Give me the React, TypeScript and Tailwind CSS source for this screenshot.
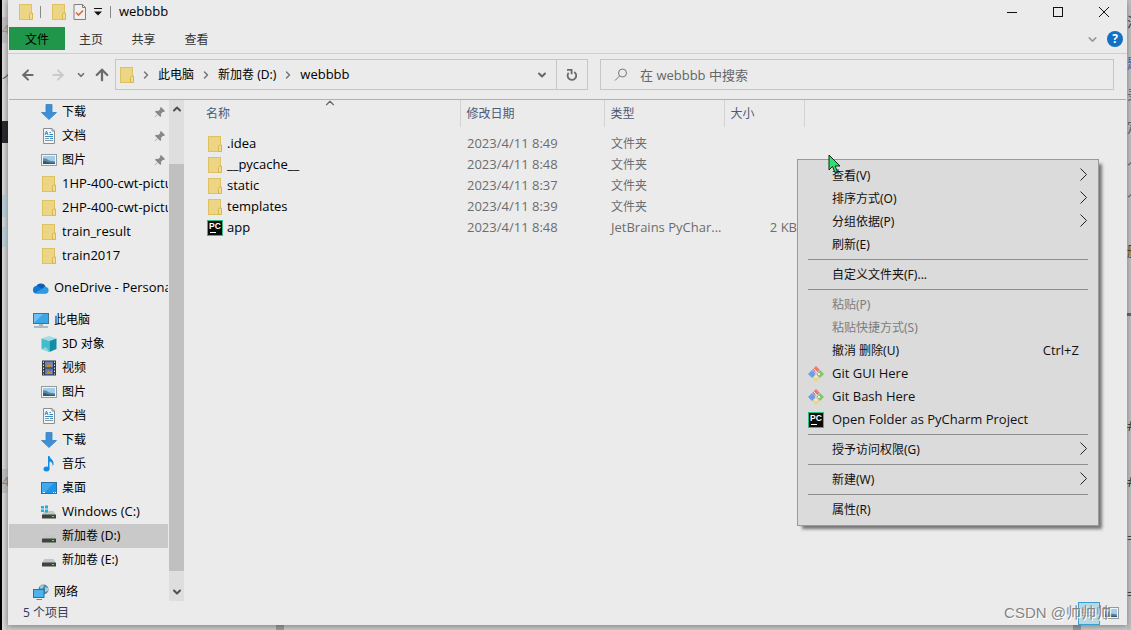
import { ReactNode } from 'react'
import { ArrowLeft, ArrowRight, ArrowUp, ChevronDown, ChevronRight, ChevronUp } from 'lucide-react'

type TreeItem = { label: string; icon: ReactNode; pinned?: boolean; selected?: boolean }

type MenuEntry = { label: string; icon?: ReactNode; shortcut?: string; arrow?: boolean; disabled?: boolean }

function FolderIcon() {
  return (
    <svg width="14" height="16" viewBox="0 0 14 16" className="shrink-0">
      <rect x="0.5" y="0.5" width="12" height="15" fill="#ecd584" stroke="#e0c160" />
      <path d="M10.5 15.5v-5l1-1.5h2v6.5z" fill="#f0dc94" stroke="#d9b646" />
    </svg>
  )
}

function PropertiesIcon() {
  return (
    <svg width="14" height="16" viewBox="0 0 14 16" className="shrink-0">
      <path d="M1 .5h8.500l3 3v12H1z" fill="#f0f0f0" stroke="#808080" />
      <path d="M9.500 .5v3h3" fill="none" stroke="#808080" />
      <path d="M3 8.500l2.500 2.500L10 6.500" fill="none" stroke="#dd6a40" strokeWidth="1.600" />
    </svg>
  )
}

function DownloadIcon() {
  return (
    <svg width="16" height="16" viewBox="0 0 16 16" className="shrink-0">
      <path d="M5 .5h6v8h4.500L8 15.500.5 8.500H5z" fill="#3f8fd6" stroke="#3480c4" strokeWidth="0.8" />
    </svg>
  )
}

function DocIcon() {
  return (
    <svg width="16" height="16" viewBox="0 0 16 16" className="shrink-0">
      <path d="M2.500.5H11l2.500 2.500v12.500h-11z" fill="#f2f4f5" stroke="#8a8f92" />
      <path d="M11 .5V3h2.500" fill="none" stroke="#8a8f92" />
      <path d="M4 7l1.500-4L7 7M4.500 5.500h2M8.500 4.500H10M8.500 6.500H12M4 8.500h8M9 10.500h3" fill="none" stroke="#3a8fc9" />
      <path d="M4 10.500h4M4 12.500h8" stroke="#8a9aa5" />
    </svg>
  )
}

function PictureIcon() {
  return (
    <svg width="16" height="16" viewBox="0 0 16 16" className="shrink-0">
      <rect x="0.500" y="2.500" width="15" height="11" fill="#f4f4f4" stroke="#949a9e" />
      <rect x="2" y="4" width="12" height="8" fill="#9fcdec" />
      <path d="M2 6.500h3l3 2 6 1v2.500H2z" fill="#5d86a0" />
      <path d="M2 9l3 .5 3 1 6 .5V12H2z" fill="#33586b" />
    </svg>
  )
}

function CloudIcon() {
  return (
    <svg width="16" height="16" viewBox="0 0 16 16" className="shrink-0">
      <path d="M3 6.500a5.300 5.300 0 0 1 9.600.3L8 11H3z" fill="#0f5fb0" />
      <path d="M0 9.800A3.600 3.600 0 0 1 5.800 6.700L14 12.500l-1 1H3.500A3.600 3.600 0 0 1 0 9.800z" fill="#1478cf" />
      <path d="M2.200 13.200L10 8a3.800 3.800 0 0 1 3-.9 3.250 3.250 0 0 1-.2 6.400H3.500z" fill="#2b9be8" />
    </svg>
  )
}

function ComputerIcon() {
  return (
    <svg width="16" height="16" viewBox="0 0 16 16" className="shrink-0">
      <rect x="0.500" y="1.500" width="15" height="10" fill="#3ba6e8" stroke="#47718d" />
      <path d="M1 11V2h9z" fill="#6cc0f2" />
      <path d="M6 13h4M1 15h14" stroke="#6b8797" />
    </svg>
  )
}

function CubeIcon() {
  return (
    <svg width="16" height="16" viewBox="0 0 16 16" className="shrink-0">
      <path d="M8 0l7.500 2.500L9 5 .5 2.500z" fill="#9fdde4" />
      <path d="M.5 2.500L8.500 5v11L.5 13z" fill="#43bccb" />
      <path d="M8.500 5l7-2.500V13l-7 3z" fill="#158ca5" />
      <path d="M1 13l4-2 3.500 5z" fill="#8ad9df" />
    </svg>
  )
}

function VideoIcon() {
  return (
    <svg width="16" height="16" viewBox="0 0 16 16" className="shrink-0">
      <rect x="1" y="0.500" width="14" height="15" fill="#33363b" />
      <path d="M2.500 1.500v13M13.500 1.500v13" stroke="#e3e3e3" strokeDasharray="1.500 1.500" />
      <rect x="4" y="1.500" width="8" height="6" fill="#5d85c8" />
      <rect x="4" y="8.500" width="8" height="6" fill="#5179be" />
      <path d="M5 7l2-4 2 2 2-2v4zM5 14l2-4 2 2 2-2v4z" fill="#c98536" />
    </svg>
  )
}

function MusicIcon() {
  return (
    <svg width="16" height="16" viewBox="0 0 16 16" className="shrink-0">
      <ellipse cx="5.500" cy="13" rx="3" ry="2.500" fill="#128ce0" />
      <path d="M7 0h1.500c.5 3 4.500 3.500 4 8.500l-1 1.500c.3-3-1-4-3-4.500V13H7z" fill="#128ce0" />
    </svg>
  )
}

function DesktopIcon() {
  return (
    <svg width="16" height="16" viewBox="0 0 16 16" className="shrink-0">
      <rect x="0.500" y="2.500" width="15" height="11" fill="#1e94e6" stroke="#2d6f9e" />
      <path d="M1 3h12L3 13H1z" fill="#41a9ef" />
      <path d="M2 12.500h2M12 12.500h1M14 12.500h1" stroke="#fff" />
    </svg>
  )
}

function DriveIcon({ windows = false }: { windows?: boolean }) {
  return (
    <svg width="16" height="16" viewBox="0 0 16 16" className="shrink-0">
      <path d="M3.500 7h9L15 11H1z" fill="#c4c6c6" />
      <rect x="1" y="10.500" width="14" height="4" rx="0.500" fill="#3f4441" />
      <rect x="11" y="12" width="2" height="1" fill="#6ee06b" />
      {windows && <path d="M0 2h3v2.500H0zM4 1.500h3v3H4zM0 5.500h3V8H0zM4 5.500h3v3H4z" fill="#1fb0dd" />}
    </svg>
  )
}

function NetworkIcon() {
  return (
    <svg width="16" height="16" viewBox="0 0 16 16" className="shrink-0">
      <circle cx="10.500" cy="5.500" r="5" fill="#4f87a3" />
      <path d="M7 2l4-1.500L10 4 7.500 5zM12 3l3 1v3l-3 1z" fill="#9fcfe0" />
      <rect x="0.500" y="5.500" width="10.500" height="8" fill="#4bb3ee" stroke="#36708f" />
      <path d="M3.500 15.500H9" stroke="#6b8797" />
    </svg>
  )
}

function PyCharmIcon() {
  return (
    <svg width="16" height="16" viewBox="0 0 16 16" className="shrink-0">
      <rect x="0.500" y="0.500" width="15" height="15" fill="#0c0c0c" stroke="#2dbe85" />
      <text x="2" y="9" fill="#fff" fontSize="8.500" fontWeight="700" fontFamily="Liberation Sans, sans-serif">PC</text>
      <path d="M3 12.500h6" stroke="#fff" />
    </svg>
  )
}

function GitIcon() {
  return (
    <svg width="16" height="16" viewBox="0 0 16 16" className="shrink-0">
      <path d="M8 0l3.700 3.700L8 7.400 4.300 3.700z" fill="#e87b78" />
      <path d="M4 4l4 4-4 4-4-4z" fill="#6c9ee8" />
      <path d="M12 4l4 4-4 4-4-4z" fill="#83c46d" />
      <path d="M8 8.600l3.700 3.700L8 16l-3.700-3.700z" fill="#ead58a" />
      <path d="M5.500 2.500L8 5l2.500 2.500M8 5v6" stroke="#e3e3e3" fill="none" />
      <circle cx="11" cy="8" r="1.200" fill="#eee" />
      <circle cx="8" cy="11" r="1" fill="#eee" />
    </svg>
  )
}

function PinIcon() {
  return (
    <svg width="12" height="12" viewBox="0 0 12 12" className="shrink-0">
      <path d="M7 1l4 4-1 1-1-.3-2 2 .2 2.300-1 1L3.800 8.500 1 11.300.7 11l2.800-2.800L1 5.800l1-1 2.300.2 2-2L6 2z" fill="#85898d" />
    </svg>
  )
}

function RefreshIcon() {
  return (
    <svg width="12" height="14" viewBox="0 0 12 14" fill="none" stroke="#6b6b6b" strokeWidth="1.800">
      <path d="M8.200 3.900A4.300 4.300 0 1 1 2.600 4.800" />
      <path d="M1 1.900h4.600v4.300" />
    </svg>
  )
}

function SearchIcon() {
  return (
    <svg width="14" height="14" viewBox="0 0 14 14" fill="none" stroke="#777" className="shrink-0">
      <circle cx="8.500" cy="5" r="4" />
      <path d="M5.500 8L1 12.500" />
    </svg>
  )
}

const quickAccess: TreeItem[] = [
  { label: '下载', icon: <DownloadIcon />, pinned: true },
  { label: '文档', icon: <DocIcon />, pinned: true },
  { label: '图片', icon: <PictureIcon />, pinned: true },
  { label: '1HP-400-cwt-pictu', icon: <FolderIcon /> },
  { label: '2HP-400-cwt-pictu', icon: <FolderIcon /> },
  { label: 'train_result', icon: <FolderIcon /> },
  { label: 'train2017', icon: <FolderIcon /> },
]

const computer: TreeItem[] = [
  { label: '3D 对象', icon: <CubeIcon /> },
  { label: '视频', icon: <VideoIcon /> },
  { label: '图片', icon: <PictureIcon /> },
  { label: '文档', icon: <DocIcon /> },
  { label: '下载', icon: <DownloadIcon /> },
  { label: '音乐', icon: <MusicIcon /> },
  { label: '桌面', icon: <DesktopIcon /> },
  { label: 'Windows (C:)', icon: <DriveIcon windows /> },
  { label: '新加卷 (D:)', icon: <DriveIcon />, selected: true },
  { label: '新加卷 (E:)', icon: <DriveIcon /> },
]

const files = [
  { name: '.idea', date: '2023/4/11 8:49', type: '文件夹', size: '' },
  { name: '__pycache__', date: '2023/4/11 8:48', type: '文件夹', size: '' },
  { name: 'static', date: '2023/4/11 8:37', type: '文件夹', size: '' },
  { name: 'templates', date: '2023/4/11 8:39', type: '文件夹', size: '' },
  { name: 'app', date: '2023/4/11 8:48', type: 'JetBrains PyChar...', size: '2 KB' },
]

const menuGroups: MenuEntry[][] = [
  [
    { label: '查看(V)', arrow: true },
    { label: '排序方式(O)', arrow: true },
    { label: '分组依据(P)', arrow: true },
    { label: '刷新(E)' },
  ],
  [{ label: '自定义文件夹(F)...' }],
  [
    { label: '粘贴(P)', disabled: true },
    { label: '粘贴快捷方式(S)', disabled: true },
    { label: '撤消 删除(U)', shortcut: 'Ctrl+Z' },
    { label: 'Git GUI Here', icon: <GitIcon /> },
    { label: 'Git Bash Here', icon: <GitIcon /> },
    { label: 'Open Folder as PyCharm Project', icon: <PyCharmIcon /> },
  ],
  [{ label: '授予访问权限(G)', arrow: true }],
  [{ label: '新建(W)', arrow: true }],
  [{ label: '属性(R)' }],
]

// latin-only labels run one size larger than the chinese ones
const latin = "text-[13px] pb-0.5 font-['Open_Sans','Noto_Sans_CJK_SC',sans-serif]"
const textSize = (label: string) => (/[\u4e00-\u9fff]/.test(label) ? 'text-[12px]' : latin)

function TreeRow({ item, root = false }: { item: TreeItem; root?: boolean }) {
  return (
    <button
      className={`flex h-6 w-full shrink-0 items-center gap-[5px] overflow-hidden whitespace-nowrap text-left ${root ? 'pl-6' : 'pl-8'} ${item.selected ? 'bg-[#c9c9c9]' : ''}`}
    >
      <span className="flex w-4 shrink-0 justify-center">{item.icon}</span>
      <span className={`flex-1 ${textSize(item.label)}`}>{item.label}</span>
      {item.pinned && (
        <span className="pr-[2px]">
          <PinIcon />
        </span>
      )}
    </button>
  )
}

function Sidebar() {
  return (
    <div className="flex w-[176px] shrink-0">
      <nav className="flex min-h-0 w-[159px] flex-col gap-2 overflow-hidden">
        <div className="shrink-0">
          {quickAccess.map((item) => (
            <TreeRow key={item.label} item={item} />
          ))}
        </div>
        <TreeRow root item={{ label: 'OneDrive - Persona', icon: <CloudIcon /> }} />
        <div className="shrink-0">
          <TreeRow root item={{ label: '此电脑', icon: <ComputerIcon /> }} />
          {computer.map((item) => (
            <TreeRow key={item.label} item={item} />
          ))}
        </div>
        <TreeRow root item={{ label: '网络', icon: <NetworkIcon /> }} />
      </nav>
      <div className="ml-px flex w-[15px] flex-col bg-[#dedede] text-[#505050]">
        <button aria-label="向上滚动" className="flex h-[18px] items-center justify-center">
          <ChevronUp size={12} strokeWidth={4} />
        </button>
        <div className="h-[46px]" />
        <div className="flex-1 bg-[#c0c0c0]" />
        <div className="h-3" />
        <button aria-label="向下滚动" className="flex h-[18px] items-center justify-center">
          <ChevronDown size={12} strokeWidth={4} />
        </button>
      </div>
    </div>
  )
}

function FileTable() {
  return (
    <div className="min-w-0 flex-1 pl-[13px]">
      <table className="w-full table-fixed border-collapse">
        <thead>
          <tr className="h-[27px] text-left text-[12px] text-[#4c5a78]">
            <th className="relative w-[262px] border-r border-[#d3d3d3] pl-2 font-normal">
              名称
              <ChevronUp size={14} strokeWidth={2} className="absolute -top-1 left-[125px] text-[#666]" />
            </th>
            <th className="w-[144px] border-r border-[#d3d3d3] pl-[6px] font-normal">修改日期</th>
            <th className="w-[120px] border-r border-[#d3d3d3] pl-[6px] font-normal">类型</th>
            <th className="w-[80px] border-r border-[#d3d3d3] pl-[6px] font-normal">大小</th>
            <th />
          </tr>
          <tr className="h-[6px]" />
        </thead>
        <tbody className="text-[#6d6d6d]">
          {files.map((file) => (
            <tr key={file.name} className="h-[21px] whitespace-nowrap">
              <td className="pl-[9px] text-black">
                <div className="flex items-center gap-1">
                  <span className="flex w-4 justify-center">{file.size ? <PyCharmIcon /> : <FolderIcon />}</span>
                  <span className={textSize(file.name)}>{file.name}</span>
                </div>
              </td>
              <td className={`pl-[7px] ${latin}`}>{file.date}</td>
              <td className={`pl-[7px] ${textSize(file.type)}`}>{file.type}</td>
              <td className={`pr-[7px] text-right ${latin}`}>{file.size}</td>
              <td />
            </tr>
          ))}
        </tbody>
      </table>
    </div>
  )
}

function ContextMenu() {
  return (
    <div
      role="menu"
      className="absolute top-[159px] left-[789px] w-[302px] border border-[#999] bg-[#dbdbdb] py-1 shadow-[4px_4px_3px_-1px_rgba(0,0,0,0.5)]"
    >
      {menuGroups.map((group, i) => (
        <div key={i}>
          {i > 0 && <div className="mx-[10px] my-[3px] h-px bg-[#8f8f8f]" />}
          {group.map((entry) => (
            <button
              key={entry.label}
              role="menuitem"
              disabled={entry.disabled}
              className={`flex h-[23px] w-full items-center whitespace-nowrap pr-[9px] pl-[10px] text-left ${entry.disabled ? 'text-[#7d7d7d]' : 'text-[#111]'}`}
            >
              <span className="w-6 shrink-0">{entry.icon}</span>
              <span className={`flex-1 ${textSize(entry.label)}`}>{entry.label}</span>
              {entry.shortcut && <span className={`pr-[10px] ${latin}`}>{entry.shortcut}</span>}
              {entry.arrow && (
                <svg width="10" height="15" viewBox="0 0 10 15" fill="none" stroke="#222">
                  <path d="M1.500 .5l6 6-6 6" />
                </svg>
              )}
            </button>
          ))}
        </div>
      ))}
    </div>
  )
}

function Cursor() {
  return (
    <svg width="13" height="20" viewBox="0 0 13 20" className="absolute top-[154px] left-[820px]">
      <path d="M1 1v15l3.500-3.500L7 18.500l2.500-1L7 12h5z" fill="#2fe070" stroke="#0b2a14" />
    </svg>
  )
}

function Crumb({ children }: { children: string }) {
  return (
    <>
      <ChevronRight size={12} strokeWidth={3} className="mx-[6px] text-[#777]" />
      <button className={textSize(children)}>{children}</button>
    </>
  )
}

export default function App() {
  return (
    <div className="flex h-screen min-h-[630px] overflow-hidden bg-[#cfcfcf] font-['Noto_Sans','Noto_Sans_CJK_SC',sans-serif] leading-4 text-black">
      {/* page behind the window, left edge */}
      <div className="flex w-2 shrink-0 flex-col overflow-hidden border-l-2 border-black bg-gradient-to-r from-[#dadada] to-[#c4c4c4] text-[13px]">
        <div className="mt-[17px] h-[26px] bg-[#bfbfbf] pt-1 text-[#999]">4</div>
        <div className="mt-7 h-5 text-[#555]">个</div>
        <div className="mt-[30px] h-[22px] bg-[#2a2a2e]" />
        <div className="mt-[52px] h-[22px] bg-[#b9cdd6]" />
        <div className="mt-[10px] h-5 bg-[#b9cdd6]" />
        <div className="mt-[222px] h-6 bg-[#bdbdbd] pt-1 text-[#888]">4</div>
      </div>

      <div className="flex min-w-0 flex-1 flex-col">
        <div className="relative flex min-h-0 flex-1 flex-col bg-[#ebebeb] shadow-[0_2px_6px_rgba(0,0,0,0.35)]">
          <header className="flex h-6 shrink-0 items-center pl-[11px]">
            <FolderIcon />
            <div className="mx-[7px] h-3 w-px bg-[#888]" />
            <div className="ml-[4px] flex items-center gap-[7px]">
              <FolderIcon />
              <PropertiesIcon />
              <svg width="8" height="8" viewBox="0 0 8 8" aria-hidden="true">
                <path d="M0 .5h8" stroke="#111" />
                <path d="M0 3.500h8L4 7.500z" fill="#111" />
              </svg>
            </div>
            <div className="mx-2 h-3 w-px bg-[#888]" />
            <h1 className={`flex-1 ${latin}`}>webbbb</h1>
            <div className="flex">
              <button aria-label="最小化" className="flex w-[46px] justify-center">
                <svg width="12" height="12" viewBox="0 0 12 12" stroke="#111">
                  <path d="M1 6.500h10" />
                </svg>
              </button>
              <button aria-label="最大化" className="flex w-[46px] justify-center">
                <svg width="12" height="12" viewBox="0 0 12 12" stroke="#111" fill="none">
                  <rect x="1.500" y="1.500" width="9" height="9" />
                </svg>
              </button>
              <button aria-label="关闭" className="flex w-[46px] justify-center">
                <svg width="12" height="12" viewBox="0 0 12 12" stroke="#111">
                  <path d="M1 1l10 10M11 1L1 11" />
                </svg>
              </button>
            </div>
          </header>

          <div className="flex h-[30px] shrink-0 items-center border-b border-[#cfcfcf] pl-px text-[12px] text-[#333]">
            <button className="h-[23px] w-14 bg-[#1f9649] pt-0.5 text-black">文件</button>
            <button className="w-[52px] pt-0.5">主页</button>
            <button className="w-[53px] pt-0.5">共享</button>
            <button className="w-[53px] pt-0.5">查看</button>
            <button aria-label="展开功能区" className="mr-[8px] ml-auto pt-0.5 text-[#999]">
              <ChevronDown size={13} strokeWidth={3} />
            </button>
            <button
              aria-label="帮助"
              className="mr-1 h-4 w-4 rounded-full bg-[#1470c4] text-[12px] leading-4 font-bold text-white"
            >
              ?
            </button>
          </div>

          <div className="mx-px flex h-[46px] shrink-0 items-center border-b border-[#b0b0b0] pt-[5px] pb-[9px]">
            <div className="flex w-[106px] items-center pl-[11px] text-[#6b6b6b]">
              <button aria-label="后退"><ArrowLeft size={16} strokeWidth={3} /></button>
              <button aria-label="前进" className="ml-[14px] text-[#cacaca]"><ArrowRight size={16} strokeWidth={3} /></button>
              <button aria-label="最近" className="ml-[10px]"><ChevronDown size={10} strokeWidth={4} /></button>
              <button aria-label="上移" className="ml-[7px]"><ArrowUp size={18} strokeWidth={3} /></button>
            </div>
            <div className="flex h-[31px] flex-1 items-center border border-[#c6c6c6] pl-1">
              <FolderIcon />
              <Crumb>此电脑</Crumb>
              <Crumb>新加卷 (D:)</Crumb>
              <Crumb>webbbb</Crumb>
              <button aria-label="历史记录" className="ml-auto pr-2 text-[#666]">
                <ChevronDown size={12} strokeWidth={4} />
              </button>
            </div>
            <button
              aria-label="刷新"
              className="flex h-[31px] w-[31px] items-center justify-center border border-l-0 border-[#c6c6c6]"
            >
              <RefreshIcon />
            </button>
            <label className="mr-3 ml-3 flex h-[31px] w-[514px] items-center border border-[#c6c6c6] pl-[13px]">
              <SearchIcon />
              <input
                type="search"
                aria-label="搜索"
                placeholder="在 webbbb 中搜索"
                className="ml-3 min-w-0 flex-1 bg-transparent font-['Open_Sans','Noto_Sans_CJK_SC',sans-serif] text-[13px] outline-none placeholder:text-[#666]"
              />
            </label>
          </div>

          <main className="flex min-h-0 flex-1 pl-px">
            <Sidebar />
            <FileTable />
          </main>

          <footer className="flex h-6 shrink-0 items-center pr-2 pl-[15px] text-[12px] text-[#33405e]">
            <span className="flex-1">5 个项目</span>
            <div className="flex items-center">
              <button
                aria-label="详细信息"
                className="flex h-[23px] w-[22px] items-center justify-center border border-[#3aa0cf] bg-[#b9d8e6]"
              >
                <svg width="14" height="10" viewBox="0 0 14 10" stroke="#7d98a5">
                  <path d="M0 1.500h3M5 1.500h9M0 4.500h3M5 4.500h9M0 7.500h3M5 7.500h9" />
                </svg>
              </button>
              <button aria-label="大图标" className="ml-[3px]"><PictureIcon /></button>
            </div>
          </footer>

          <ContextMenu />
          <Cursor />
          <div className="absolute right-4 bottom-0.5 text-[15px] leading-5 text-[#858585] [font-family:'Liberation_Sans','Noto_Sans_CJK_SC',sans-serif] text-shadow-[1px_1px_0_#fff]">
            CSDN @帅帅帅
          </div>
        </div>
        <div className="flex h-[5px] shrink-0 pl-[268px]">
          <div className="w-2 bg-[#a0a0a0]" />
          <div className="ml-auto mr-[46px] w-2 bg-[#a0a0a0]" />
        </div>
      </div>

      {/* right edge */}
      <div className="flex w-1 shrink-0 flex-col overflow-hidden bg-[#bfc1c3] text-[14px] text-[#444]">
        <div className="mt-[14px] h-[18px]">活</div>
        <div className="mt-[23px] h-4 text-[#2d74b5]">题</div>
        <div className="mt-4 h-4 text-[#667]">录</div>
        <div className="mt-4 h-4 text-[#667]">定</div>
        <div className="mt-4 h-4 text-[#667]">入</div>
        <div className="mt-4 h-4 text-[#667]">入</div>
        <div className="mt-11 h-4">删</div>
        <div className="mt-[54px] h-[3px] bg-[#666]" />
        <div className="mt-[102px] h-4">#</div>
        <div className="mt-10 h-4">#</div>
        <div className="mt-10 h-4">=</div>
        <div className="mt-10 h-4">=</div>
      </div>
    </div>
  )
}
